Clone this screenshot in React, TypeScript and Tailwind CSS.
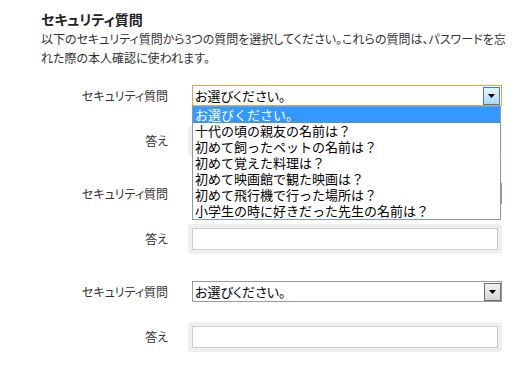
const questions = [
  'お選びください。',
  '十代の頃の親友の名前は？',
  '初めて飼ったペットの名前は？',
  '初めて覚えた料理は？',
  '初めて映画館で観た映画は？',
  '初めて飛行機で行った場所は？',
  '小学生の時に好きだった先生の名前は？',
];

export default function App() {
  return (
    <div className="w-[528px] h-[366px] overflow-hidden bg-white pl-[41px] pt-[9px] text-[#333] font-['Noto_Sans_CJK_JP','Noto_Sans',sans-serif] [font-feature-settings:'palt']">
      <h2 className="text-[14px] leading-[20px] font-bold text-[#222]">セキュリティ質問</h2>
      <p className="text-[12px] leading-[19px]">
        <span className="whitespace-nowrap">以下のセキュリティ質問から3つの質問を選択してください。これらの質問は、パスワードを忘</span>
        <br />
        <span className="whitespace-nowrap">れた際の本人確認に使われます。</span>
      </p>

      <div className="mt-[18px] flex flex-col">
        <Row label="セキュリティ質問">
          <SelectBox focused open />
        </Row>
        <Row label="答え" className="mt-[20px]">
          <AnswerBox />
        </Row>
        <Row label="セキュリティ質問" className="mt-[27px]">
          <SelectBox />
        </Row>
        <Row label="答え" className="mt-[20px]">
          <AnswerBox />
        </Row>
        <Row label="セキュリティ質問" className="mt-[27px]">
          <SelectBox />
        </Row>
        <Row label="答え" className="mt-[20px]">
          <AnswerBox />
        </Row>
      </div>
    </div>
  );
}

function Row({ label, className = '', children }: { label: string; className?: string; children: React.ReactNode }) {
  return (
    <div className={`flex items-center ${className}`}>
      <div className="w-[127px] text-right text-[12px] leading-[16px]">{label}</div>
      {children}
    </div>
  );
}

function SelectBox({ focused = false, open = false }: { focused?: boolean; open?: boolean }) {
  return (
    <div className="relative ml-[24px] w-[310px]">
      <div
        className={`flex h-[21px] items-center justify-between border bg-white ${
          focused ? 'border-[#e5a53a]' : 'border-[#9a9a9a]'
        }`}
      >
        <span className="pl-[2px] text-[13px] leading-[16px] text-black">お選びください。</span>
        <div
          className={`flex h-[18px] w-[17px] items-center justify-center border ${
            focused
              ? 'mr-px border-[#3c7fb1] bg-gradient-to-b from-[#eaf6fd] to-[#a7d9f5]'
              : 'border-[#707070] bg-gradient-to-b from-[#f2f2f2] to-[#d5d5d5]'
          }`}
        >
          <svg width="7" height="4" viewBox="0 0 7 4">
            <path d="M0 0h7L3.5 4z" fill="#000" />
          </svg>
        </div>
      </div>
      {open && (
        <ul className="absolute left-0 top-full z-10 w-[309px] border border-[#7f9db9] bg-white [font-feature-settings:normal]">
          {questions.map((q, i) => (
            <li
              key={i}
              className={`h-[16px] pl-[2px] text-[13px] leading-[16px] whitespace-nowrap ${
                i === 0 ? 'bg-[#3399ff] text-white' : 'text-black'
              }`}
            >
              {q}
            </li>
          ))}
        </ul>
      )}
    </div>
  );
}

function AnswerBox() {
  return (
    <div className="ml-[20px] w-[314px] rounded-[4px] border-4 border-[#efefef]">
      <input type="text" className="block h-[22px] w-full border border-[#cccccc] bg-white outline-none" />
    </div>
  );
}
